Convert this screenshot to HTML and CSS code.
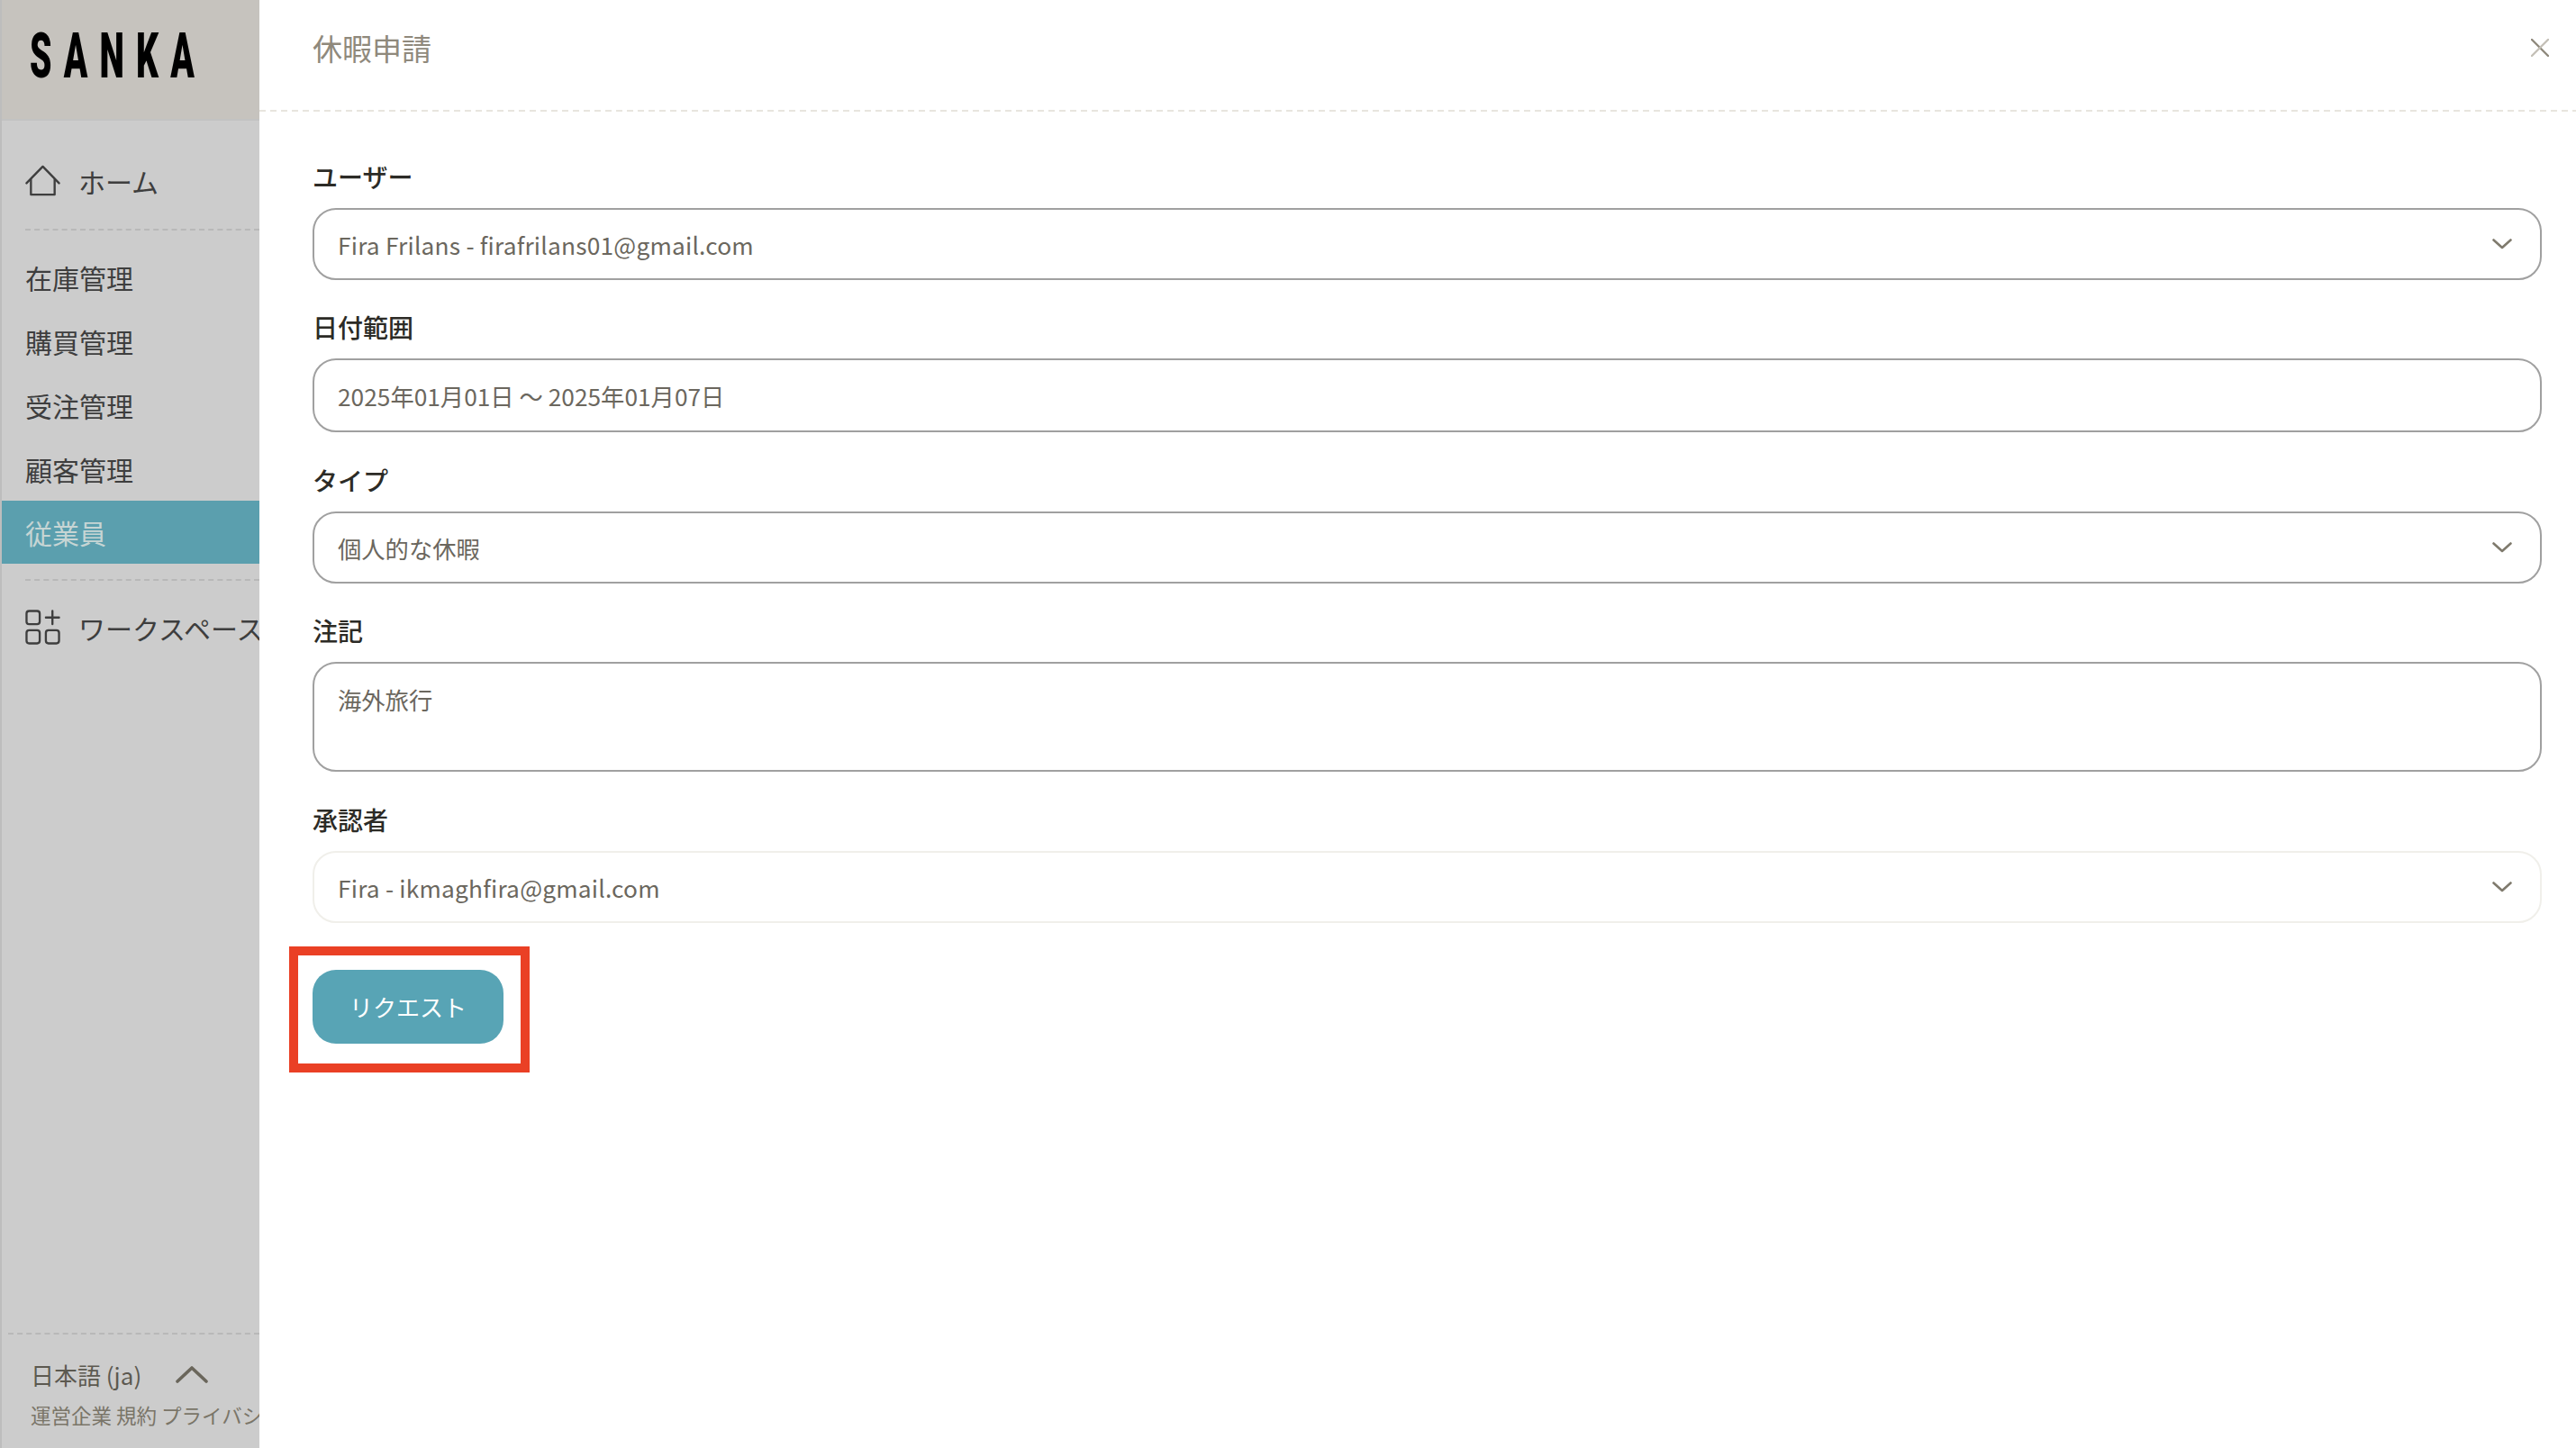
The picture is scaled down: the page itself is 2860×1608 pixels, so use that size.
FILE: index.html
```html
<!DOCTYPE html>
<html lang="ja">
<head>
    <meta charset="UTF-8">
    <title>休暇申請</title>
    <link rel="stylesheet" href="styles.css">
</head>
<body>
    <aside class="sidebar">
        <div class="logo"><span class="logo-text">SANKA</span></div>
        <nav class="nav">
            <a class="nav-item nav-icon-item">
                <svg class="nav-icon" viewBox="0 0 40 36" fill="none" stroke="#3e3e3e" stroke-width="2.4" stroke-linejoin="round" stroke-linecap="round">
                    <path d="M1.5 21 L20 2 L38.5 21"/>
                    <path d="M6.5 17 V34 H33.5 V17"/>
                </svg>
                <span>ホーム</span>
            </a>
            <div class="nav-divider"></div>
            <a class="nav-item nav-first">在庫管理</a>
            <a class="nav-item">購買管理</a>
            <a class="nav-item">受注管理</a>
            <a class="nav-item">顧客管理</a>
            <a class="nav-item active">従業員</a>
            <div class="nav-divider nav-divider-low"></div>
            <a class="nav-item nav-icon-item">
                <svg class="nav-icon" viewBox="0 0 40 40" fill="none" stroke="#3e3e3e" stroke-width="2.4" stroke-linecap="round">
                    <rect x="1.5" y="1.5" width="15" height="15" rx="3"/>
                    <rect x="1.5" y="23.5" width="15" height="15" rx="3"/>
                    <rect x="23.5" y="23.5" width="15" height="15" rx="3"/>
                    <path d="M31 1.5 V16.5 M23.5 9 H38.5"/>
                </svg>
                <span>ワークスペース</span>
            </a>
        </nav>
        <div class="side-footer">
            <div class="lang">
                <span>日本語 (ja)</span>
                <svg class="lang-arrow" viewBox="0 0 36 20" fill="none" stroke="#6a665b" stroke-width="3.6" stroke-linecap="round" stroke-linejoin="round">
                    <path d="M2 18 L18 3 L34 18"/>
                </svg>
            </div>
            <div class="side-links">運営企業 規約 プライバシー</div>
        </div>
    </aside>

    <main class="panel">
        <header class="panel-head">
            <h1>休暇申請</h1>
            <svg class="close" viewBox="0 0 20 20" fill="none" stroke="#8f897c" stroke-width="2.4" stroke-linecap="round">
                <path d="M1 1 L19 19"/>
                <path d="M19 1 L1 19" stroke="#c4c0b7"/>
            </svg>
        </header>
        <form class="form">
            <div class="field">
                <label>ユーザー</label>
                <div class="control">
                    <span class="latin">Fira Frilans - firafrilans01@gmail.com</span>
                    <svg class="chevron" viewBox="0 0 22 12" fill="none" stroke="#7f7a6d" stroke-width="2.6" stroke-linecap="round" stroke-linejoin="round"><path d="M1.5 1.5 L11 10 L20.5 1.5"/></svg>
                </div>
            </div>
            <div class="field field-date">
                <label>日付範囲</label>
                <div class="control control-date"><span>2025年01月01日 ～ 2025年01月07日</span></div>
            </div>
            <div class="field">
                <label>タイプ</label>
                <div class="control">
                    <span>個人的な休暇</span>
                    <svg class="chevron" viewBox="0 0 22 12" fill="none" stroke="#7f7a6d" stroke-width="2.6" stroke-linecap="round" stroke-linejoin="round"><path d="M1.5 1.5 L11 10 L20.5 1.5"/></svg>
                </div>
            </div>
            <div class="field field-note">
                <label>注記</label>
                <div class="control control-area"><span>海外旅行</span></div>
            </div>
            <div class="field">
                <label>承認者</label>
                <div class="control control-light">
                    <span class="latin">Fira - ikmaghfira@gmail.com</span>
                    <svg class="chevron" viewBox="0 0 22 12" fill="none" stroke="#7f7a6d" stroke-width="2.6" stroke-linecap="round" stroke-linejoin="round"><path d="M1.5 1.5 L11 10 L20.5 1.5"/></svg>
                </div>
            </div>
            <div class="submit-wrap">
                <button type="button" class="submit">リクエスト</button>
                <div class="highlight"></div>
            </div>
        </form>
    </main>
</body>
</html>
```

FILE: styles.css
```css
html, body {
    margin: 0;
    padding: 0;
    height: 100%;
}

body {
    display: flex;
    height: 1608px;
    overflow: hidden;
    background-color: #fff;
    font-family: "Noto Sans CJK JP", "Noto Sans", sans-serif;
}

.sidebar {
    box-sizing: border-box;
    width: 288px;
    flex-shrink: 0;
    display: flex;
    flex-direction: column;
    border-left: 2px solid #bdbdbd;
    background-color: #cccccc;
    overflow: hidden;
}

.logo {
    box-sizing: border-box;
    height: 134px;
    padding-left: 31px;
    border-bottom: 2px solid #c2c2c2;
    background-color: #c6c3be;
    overflow: hidden;
}

.logo-text {
    display: block;
    margin-top: 23px;
    font-family: Roboto, "Liberation Sans", sans-serif;
    font-size: 71px;
    line-height: 78px;
    font-weight: 900;
    letter-spacing: 24px;
    color: #000;
    white-space: nowrap;
    transform: scaleX(0.55);
    transform-origin: left center;
}

.nav {
    display: flex;
    flex-direction: column;
    padding-top: 31px;
}

.nav-item {
    height: 71px;
    padding-left: 26px;
    display: flex;
    align-items: center;
    font-size: 30px;
    color: #3e3e3e;
    white-space: nowrap;
}

.nav-icon-item {
    gap: 20px;
}

.nav-icon {
    width: 39px;
    height: 39px;
    flex-shrink: 0;
}

.nav-divider {
    margin: 18px 0 16px 26px;
    border-top: 2px dashed #b8b8b8;
}

.nav-divider-low {
    margin: 17px 0 16px 26px;
}

.active {
    height: 70px;
    background-color: #5b9fae;
    color: #c6d5d4;
}

.side-footer {
    margin-top: auto;
    margin-left: 7px;
    padding: 21px 0 0 25px;
    height: 128px;
    box-sizing: border-box;
    border-top: 2px dashed #b8b8b8;
}

.lang {
    display: flex;
    align-items: center;
    gap: 38px;
    height: 46px;
    font-size: 26px;
    color: #5c5950;
}

.lang-arrow {
    width: 36px;
    height: 20px;
}

.side-links {
    margin-top: 6px;
    font-size: 22.5px;
    line-height: 32px;
    color: #7a7568;
    white-space: nowrap;
}

.panel {
    flex: 1;
    min-width: 0;
    display: flex;
    flex-direction: column;
}

.panel-head {
    box-sizing: border-box;
    height: 124px;
    padding: 0 30px 18px 59px;
    display: flex;
    align-items: center;
    justify-content: space-between;
    background-image: repeating-linear-gradient(to right, #e8e5de 0, #e8e5de 7px, transparent 7px, transparent 12px);
    background-size: 100% 2px;
    background-position: bottom;
    background-repeat: no-repeat;
}

.panel-head h1 {
    margin: 0;
    font-size: 33px;
    font-weight: 400;
    color: #8f897c;
}

.close {
    width: 20px;
    height: 20px;
}

.form {
    padding: 53px 38px 0 59px;
}

.field {
    margin-bottom: 33px;
}

.field-date,
.field-note {
    margin-bottom: 34px;
}

.field label {
    display: block;
    height: 40px;
    margin-bottom: 14px;
    font-size: 28px;
    line-height: 38px;
    font-weight: 500;
    color: #2c2b26;
}

.control {
    box-sizing: border-box;
    height: 80px;
    padding: 0 31px 0 26px;
    display: flex;
    align-items: center;
    justify-content: space-between;
    border: 2px solid #a0a0a0;
    border-radius: 26px;
    font-size: 26.3px;
    color: #6b675e;
}

.latin {
    letter-spacing: 0.2px;
}

.control-date {
    height: 82px;
}

.control-area {
    height: 122px;
    align-items: flex-start;
    padding-top: 20px;
}

.control-light {
    border-color: #f0efea;
}

.chevron {
    width: 22px;
    height: 12px;
}

.submit-wrap {
    position: relative;
    width: 212px;
    margin-top: 52px;
}

.submit {
    display: block;
    width: 212px;
    height: 82px;
    padding: 0 0 2px;
    border: none;
    border-radius: 26px;
    background-color: #58a4b5;
    color: #fff;
    font-family: inherit;
    font-size: 26px;
}

.highlight {
    position: absolute;
    top: -26px;
    left: -26px;
    right: -29px;
    bottom: -32px;
    border: 10px solid #ea4025;
}
```
